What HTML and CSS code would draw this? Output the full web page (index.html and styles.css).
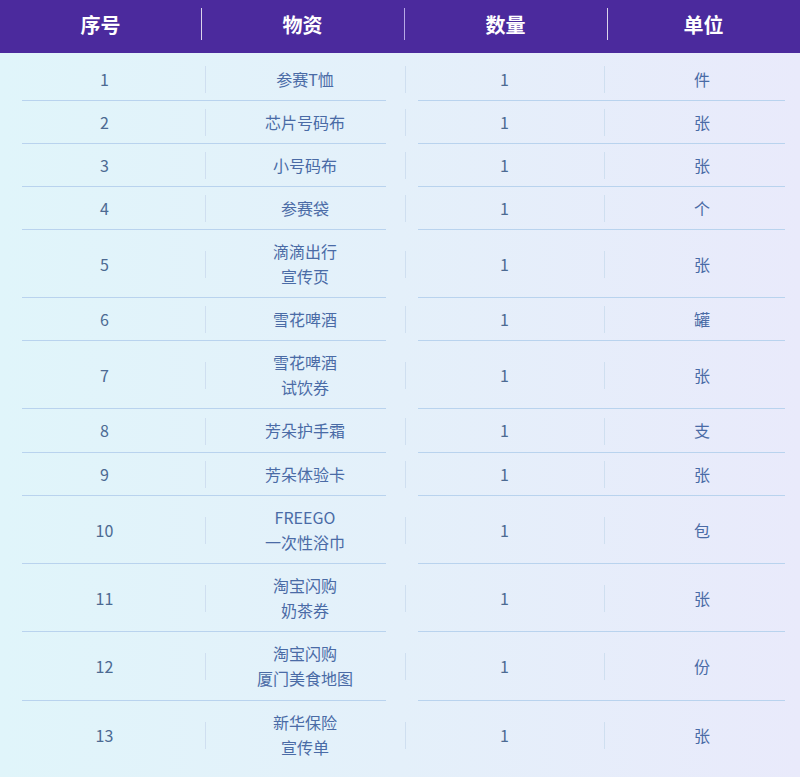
FILE: index.html
```html
<!DOCTYPE html>
<html lang="zh">
<head>
<meta charset="utf-8">
<title>物资清单</title>
<link rel="stylesheet" href="styles.css">
</head>
<body>
<div class="page">
  <div class="head">
    <div class="hcell">序号</div>
    <div class="hcell">物资</div>
    <div class="hcell">数量</div>
    <div class="hcell">单位</div>
  </div>
  <div class="body">
    <div class="row"><div class="c num">1</div><div class="c">参赛T恤</div><div class="c num">1</div><div class="c">件</div></div>
    <div class="row"><div class="c num">2</div><div class="c">芯片号码布</div><div class="c num">1</div><div class="c">张</div></div>
    <div class="row"><div class="c num">3</div><div class="c">小号码布</div><div class="c num">1</div><div class="c">张</div></div>
    <div class="row"><div class="c num">4</div><div class="c">参赛袋</div><div class="c num">1</div><div class="c">个</div></div>
    <div class="row"><div class="c num">5</div><div class="c">滴滴出行<br>宣传页</div><div class="c num">1</div><div class="c">张</div></div>
    <div class="row"><div class="c num">6</div><div class="c">雪花啤酒</div><div class="c num">1</div><div class="c">罐</div></div>
    <div class="row"><div class="c num">7</div><div class="c">雪花啤酒<br>试饮券</div><div class="c num">1</div><div class="c">张</div></div>
    <div class="row tall"><div class="c num">8</div><div class="c">芳朵护手霜</div><div class="c num">1</div><div class="c">支</div></div>
    <div class="row"><div class="c num">9</div><div class="c">芳朵体验卡</div><div class="c num">1</div><div class="c">张</div></div>
    <div class="row"><div class="c num">10</div><div class="c">FREEGO<br>一次性浴巾</div><div class="c num">1</div><div class="c">包</div></div>
    <div class="row"><div class="c num">11</div><div class="c">淘宝闪购<br>奶茶券</div><div class="c num">1</div><div class="c">张</div></div>
    <div class="row tall"><div class="c num">12</div><div class="c">淘宝闪购<br>厦门美食地图</div><div class="c num">1</div><div class="c">份</div></div>
    <div class="row last"><div class="c num">13</div><div class="c">新华保险<br>宣传单</div><div class="c num">1</div><div class="c">张</div></div>
  </div>
</div>
</body>
</html>
```
FILE: styles.css
```css
html, body {
  margin: 0;
  padding: 0;
}
body {
  width: 800px;
  height: 777px;
  overflow: hidden;
  font-family: "Noto Sans CJK SC", "Noto Sans", sans-serif;
  background: linear-gradient(90deg, #e0f5fa 0%, #e4f0fa 50%, #e9eafb 100%);
}
.page {
  width: 800px;
}
.head {
  display: grid;
  grid-template-columns: 201px 203px 203px 193px;
  height: 53px;
  background: #4b2a9d;
  color: #ffffff;
  font-weight: 700;
  font-size: 20px;
}
.hcell {
  display: flex;
  align-items: center;
  justify-content: center;
  padding-bottom: 4px;
  box-sizing: border-box;
}
.hcell + .hcell {
  background: linear-gradient(rgba(255,255,255,0.8), rgba(255,255,255,0.8)) left 8px / 1px 32px no-repeat;
}
.hcell:nth-child(3) {
  background-image: linear-gradient(#b7a9e6, #b7a9e6);
}
.body {
  padding-top: 5px;
}
.row {
  display: grid;
  grid-template-columns: 205px 200px 199px 196px;
  background:
    linear-gradient(#b9d3ee, #b9d3ee) 22px 100% / 364px 1px no-repeat,
    linear-gradient(#b9d3ee, #b9d3ee) 418px 100% / 367px 1px no-repeat;
}
.row.tall .c {
  padding-bottom: 10px;
}
.row.last {
  background: none;
}
.c {
  display: flex;
  align-items: center;
  justify-content: center;
  text-align: center;
  padding: 9px 0;
  line-height: 25px;
  font-size: 16px;
  color: #4a6ba6;
}
.c.num {
  color: #4c6a92;
}
.c:first-child {
  padding-left: 4px;
}
.c + .c {
  background: linear-gradient(#cfdff0, #cfdff0) left center / 1px 27px no-repeat;
}
```
